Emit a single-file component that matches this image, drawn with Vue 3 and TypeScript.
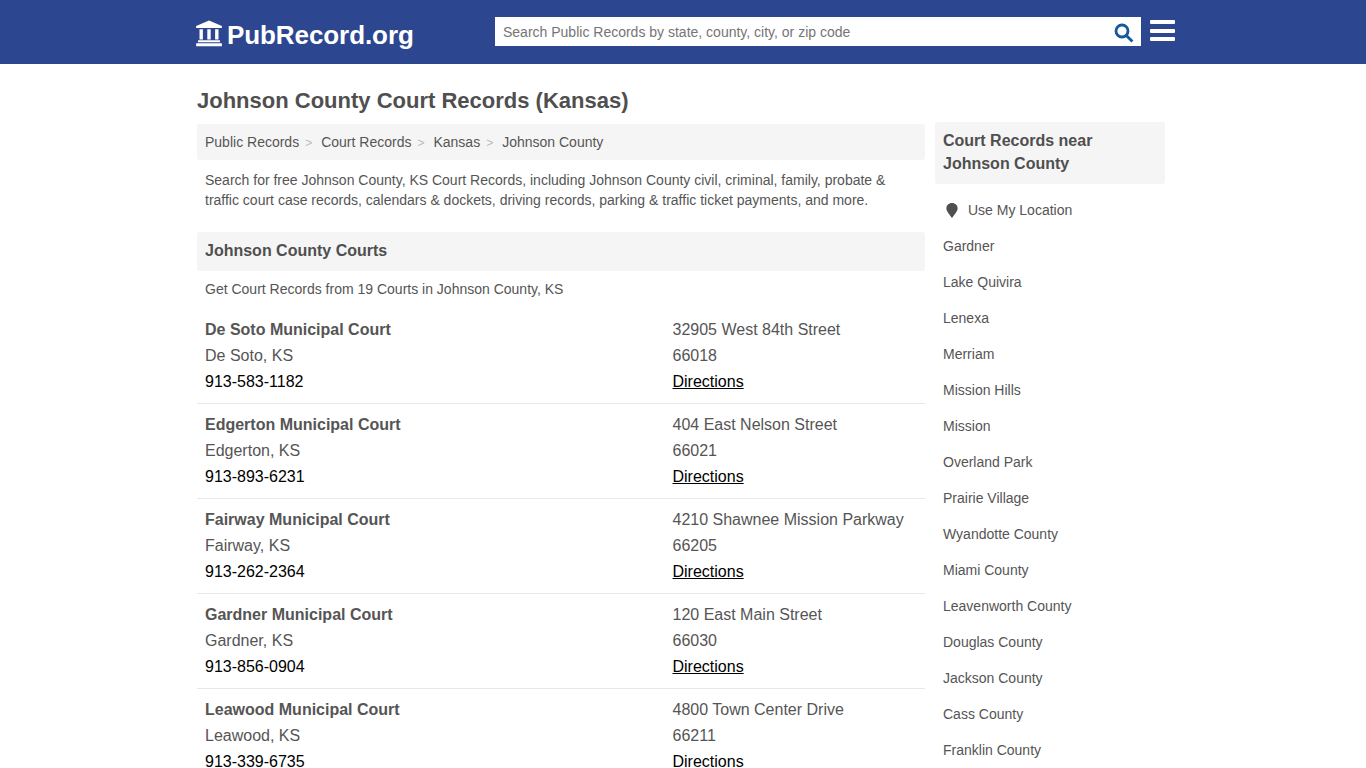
<template>
  <div class="page">
    <header class="topbar">
      <div class="topbar__inner">
        <a class="logo" href="#">
          <svg class="logo__icon" viewBox="0 0 512 512" aria-hidden="true">
            <path d="M256 10 L500 112 V150 H12 V112 Z" />
            <path d="M76 176 H140 V370 H76 Z M224 176 H288 V370 H224 Z M372 176 H436 V370 H372 Z" />
            <path d="M48 384 H464 V424 H48 Z M12 442 H500 V500 H12 Z" />
          </svg>
          <span class="logo__text">PubRecord.org</span>
        </a>
        <form class="search" @submit.prevent>
          <input class="search__input" type="text" placeholder="Search Public Records by state, county, city, or zip code" />
          <svg class="search__icon" viewBox="0 0 20 20" aria-hidden="true">
            <circle cx="8" cy="8" r="6" />
            <path d="M12.4 12.4 L18.4 18.4" />
          </svg>
        </form>
        <div class="burger" aria-hidden="true">
          <span></span><span></span><span></span>
        </div>
      </div>
    </header>

    <div class="container">
      <h1 class="title">Johnson County Court Records (Kansas)</h1>
      <div class="columns">
        <main class="main">
          <nav class="crumbs">
            <template v-for="(c, i) in crumbs" :key="c">
              <span class="crumbs__sep" v-if="i > 0">&gt;</span>
              <a href="#">{{ c }}</a>
            </template>
          </nav>
          <p class="intro">
            Search for free Johnson County, KS Court Records, including Johnson County civil, criminal, family, probate &amp;
            traffic court case records, calendars &amp; dockets, driving records, parking &amp; traffic ticket payments, and more.
          </p>
          <h2 class="section">Johnson County Courts</h2>
          <p class="sub">Get Court Records from 19 Courts in Johnson County, KS</p>
          <div class="court" v-for="c in courts" :key="c.name">
            <div>
              <div class="court__name">{{ c.name }}</div>
              <div>{{ c.city }}</div>
              <div class="court__phone">{{ c.phone }}</div>
            </div>
            <div>
              <div>{{ c.street }}</div>
              <div>{{ c.zip }}</div>
              <a class="court__link" href="#">Directions</a>
            </div>
          </div>
        </main>
        <aside class="side">
          <h3 class="side__head">Court Records near Johnson County</h3>
          <ul class="side__list">
            <li class="side__loc">
              <svg class="pin" viewBox="0 0 12 16" aria-hidden="true">
                <path d="M6 0 C9.4 0 12 2.5 12 5.8 C12 9 8 13 6 16 C4 13 0 9 0 5.8 C0 2.5 2.6 0 6 0 Z" />
              </svg>
              <a href="#">Use My Location</a>
            </li>
            <li v-for="p in places" :key="p"><a href="#">{{ p }}</a></li>
          </ul>
        </aside>
      </div>
    </div>
  </div>
</template>

<script setup lang="ts">
const crumbs = ["Public Records", "Court Records", "Kansas", "Johnson County"];

const courts = [
  { name: "De Soto Municipal Court", city: "De Soto, KS", phone: "913-583-1182", street: "32905 West 84th Street", zip: "66018" },
  { name: "Edgerton Municipal Court", city: "Edgerton, KS", phone: "913-893-6231", street: "404 East Nelson Street", zip: "66021" },
  { name: "Fairway Municipal Court", city: "Fairway, KS", phone: "913-262-2364", street: "4210 Shawnee Mission Parkway", zip: "66205" },
  { name: "Gardner Municipal Court", city: "Gardner, KS", phone: "913-856-0904", street: "120 East Main Street", zip: "66030" },
  { name: "Leawood Municipal Court", city: "Leawood, KS", phone: "913-339-6735", street: "4800 Town Center Drive", zip: "66211" },
];

const places = [
  "Gardner", "Lake Quivira", "Lenexa", "Merriam", "Mission Hills", "Mission", "Overland Park",
  "Prairie Village", "Wyandotte County", "Miami County", "Leavenworth County", "Douglas County",
  "Jackson County", "Cass County", "Franklin County",
];
</script>

<style>
html, body {
  margin: 0;
  background: #fff;
  overflow: hidden;
  height: 768px;
}
</style>

<style scoped>
.page {
  font-family: "Liberation Sans", Arial, sans-serif;
  color: #555;
  height: 768px;
  overflow: hidden;
}

a {
  color: inherit;
  text-decoration: none;
}

.topbar {
  background: #2d4690;
  height: 64px;
}

.topbar__inner {
  width: 1000px;
  margin: 0 auto;
  display: flex;
  align-items: flex-start;
  box-sizing: border-box;
  height: 64px;
}

.logo {
  display: flex;
  align-items: center;
  color: #fff;
  margin: 19px 0 0 12px;
  height: 32px;
  width: 300px;
}

.logo__icon {
  width: 28px;
  height: 27px;
  fill: #fff;
  margin-right: 4px;
  margin-top: -4px;
}

.logo__text {
  font-size: 26px;
  font-weight: 700;
  letter-spacing: -0.08px;
}

.search {
  position: relative;
  width: 646px;
  height: 29px;
  margin-top: 17px;
}

.search__input {
  width: 100%;
  height: 100%;
  box-sizing: border-box;
  border: 0;
  outline: 0;
  padding: 0 40px 0 8px;
  font: 14px "Liberation Sans", Arial, sans-serif;
  background: #fff;
  color: #555;
}

.search__input::placeholder {
  color: #757575;
  opacity: 1;
}

.search__icon {
  position: absolute;
  right: 7px;
  top: 6px;
  width: 20px;
  height: 20px;
  fill: none;
  stroke: #14589f;
  stroke-width: 2.8;
}

.burger {
  margin: 20px 0 0 9px;
  width: 25px;
  display: flex;
  flex-direction: column;
  gap: 4.5px;
}

.burger span {
  display: block;
  height: 4px;
  background: #fff;
  border-radius: 1px;
}

.container {
  width: 1000px;
  margin: 0 auto;
  padding: 0 18px 0 14px;
  box-sizing: border-box;
}

.title {
  font-size: 22px;
  line-height: 26px;
  font-weight: 700;
  color: #4f4f4f;
  margin: 24px 0 0;
}

.columns {
  display: flex;
  gap: 10px;
  margin-top: 8px;
  align-items: flex-start;
}

.main {
  width: 728px;
  flex: none;
  margin-top: 2px;
}

.crumbs {
  background: #f5f5f5;
  border-radius: 3px;
  height: 36px;
  line-height: 36px;
  padding: 0 8px;
  font-size: 14px;
}

.crumbs__sep {
  color: #bbb;
  font-size: 12px;
  margin: 0 9px 0 6px;
}

.intro {
  font-size: 14px;
  line-height: 20px;
  margin: 10px 0 0;
  padding: 0 8px;
}

.section {
  background: #f5f5f5;
  border-radius: 3px;
  font-size: 16px;
  font-weight: 700;
  line-height: 37px;
  height: 39px;
  margin: 22px 0 0;
  padding: 0 8px;
  color: #4f4f4f;
}

.sub {
  font-size: 14px;
  line-height: 20px;
  margin: 8px 0 0;
  padding: 0 8px;
}

.court {
  display: grid;
  grid-template-columns: 467.5px 1fr;
  padding: 18px 8px 8px;
  font-size: 16px;
  line-height: 26px;
  border-bottom: 1px solid #e8e8e8;
}

.court + .court {
  padding-top: 8px;
}

.court__name {
  font-weight: 700;
}

.court__phone {
  color: #000;
}

.court__link {
  color: #000;
  text-decoration: underline;
}

.side {
  width: 230px;
  flex: none;
}

.side__head {
  background: #f5f5f5;
  border-radius: 3px;
  margin: 0;
  padding: 7px 8px 9px;
  font-size: 16px;
  line-height: 23px;
  font-weight: 700;
  color: #4f4f4f;
}

.side__list {
  list-style: none;
  margin: 8px 0 0;
  padding: 0 8px;
  font-size: 14px;
}

.side__list li {
  height: 36px;
  line-height: 36px;
}

.side__loc {
  display: flex;
  align-items: center;
}

.pin {
  width: 12px;
  height: 15px;
  fill: #4f4f4f;
  margin: 0 10px 0 3px;
}
</style>
